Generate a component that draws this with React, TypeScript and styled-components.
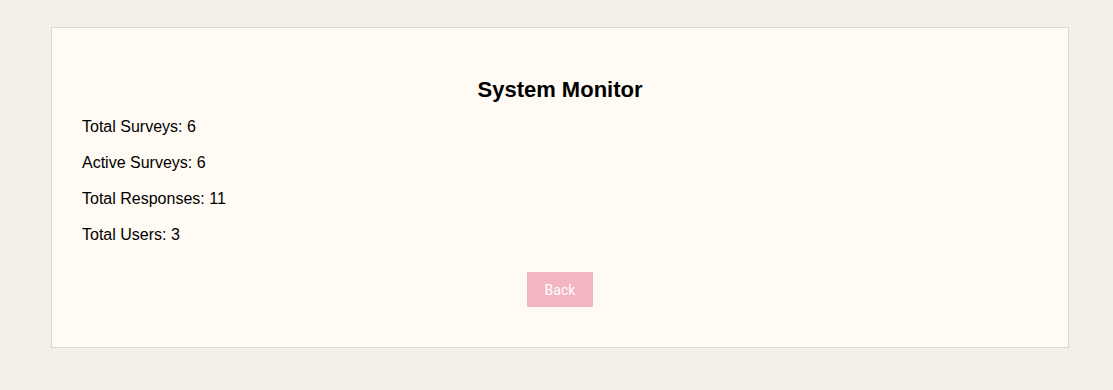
import styled, { createGlobalStyle } from "styled-components";

const GlobalStyle = createGlobalStyle`
  body {
    margin: 0;
    background: #f3efe9;
    font-family: "Liberation Sans", Arial, sans-serif;
    color: #000;
  }
`;

const Page = styled.div`
  padding: 27px 44px 40px 51px;
`;

const Card = styled.section`
  background: #fffaf3;
  border: 1px solid #ddd6cb;
  padding: 30px 30px 40px;
  display: flex;
  flex-direction: column;
`;

const Title = styled.h2`
  margin: 19px 0 14px;
  font-size: 22px;
  line-height: 26px;
  font-weight: bold;
  text-align: center;
`;

const Stats = styled.div`
  display: flex;
  flex-direction: column;
  gap: 16px;
`;

const Stat = styled.p`
  margin: 0;
  font-size: 16px;
  line-height: 20px;
`;

const BackButton = styled.button`
  align-self: center;
  margin-top: 27px;
  width: 66px;
  height: 35px;
  border: none;
  background: #f4b5c3;
  color: #fff;
  font-family: Roboto, "Liberation Sans", sans-serif;
  font-size: 14px;
  cursor: pointer;
`;

const stats = [
  ["Total Surveys", 6],
  ["Active Surveys", 6],
  ["Total Responses", 11],
  ["Total Users", 3],
];

export default function App() {
  return (
    <>
      <GlobalStyle />
      <Page>
        <Card>
          <Title>System Monitor</Title>
          <Stats>
            {stats.map(([label, value]) => (
              <Stat key={label}>
                {label}: {value}
              </Stat>
            ))}
          </Stats>
          <BackButton>Back</BackButton>
        </Card>
      </Page>
    </>
  );
}
